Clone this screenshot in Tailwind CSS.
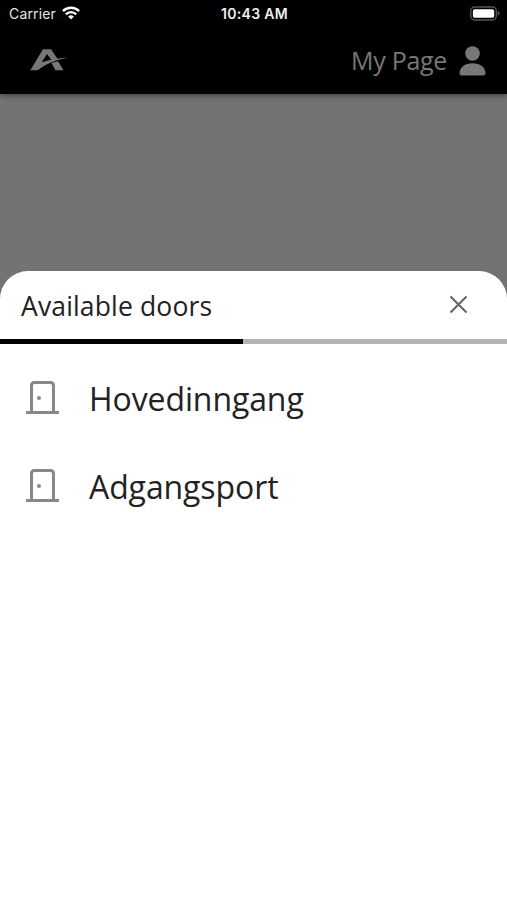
<!DOCTYPE html>
<html lang="en">
<head>
  <meta charset="UTF-8" />
  <meta name="viewport" content="width=device-width, initial-scale=1" />
  <title>Available doors</title>
  <script src="https://cdn.jsdelivr.net/npm/@tailwindcss/browser@4"></script>
</head>
<body class="h-screen flex flex-col overflow-hidden bg-[#737373] font-['Open_Sans',sans-serif]">

  <!-- Status bar -->
  <div class="relative z-10 h-7 shrink-0 grid grid-cols-3 items-center bg-black pl-[9px] pr-[7px] text-white font-['Inter',sans-serif] text-[14px] leading-none">
    <div class="flex items-center gap-[6px]">
      <span class="-mt-px tracking-[0.150px] text-[#e5e5e5]">Carrier</span>
      <svg class="w-[18px] h-[14px] -mt-0.5" viewBox="0 0 18 14" fill="none" stroke="#fff" stroke-width="2.4">
        <path d="M.9 5.1a11.5 11.5 0 0 1 16.2 0" />
        <path d="M3.8 8.3a7.3 7.3 0 0 1 10.4 0" />
        <path d="M9 13.6l-2.9-3a4.1 4.1 0 0 1 5.8 0z" fill="#fff" stroke="none" />
      </svg>
    </div>
    <span class="-mt-px text-center font-semibold tracking-[0.300px] text-[#eee]">10:43 AM</span>
    <svg class="justify-self-end w-[30px] h-[15px] -mt-0.5" viewBox="0 0 31 15">
      <rect x=".8" y=".8" width="26.4" height="13.4" rx="4" fill="none" stroke="#555" stroke-width="1.4" />
      <rect x="3" y="3" width="22" height="9" rx="2" fill="#fff" />
      <path d="M28.6 5v5q2-1 2-2.500t-2-2.500z" fill="#555" />
    </svg>
  </div>

  <!-- Header -->
  <header class="h-[66px] shrink-0 flex items-center justify-between bg-black pl-[30px] pr-[21px] shadow-[0_2px_5px_rgba(0,0,0,0.4)]">
    <svg class="w-[38px] h-[22px] -mt-0.5" viewBox="0 0 38 22" fill="#777">
      <path d="M.3 21.300 13 .3h8l6.500 9.500-6 1.300L17 5l-5.300 8.300Q21 9.500 38 8.400 18 12.500 7.500 21.300z" />
      <path d="M21.500 14 28 12.200 33.500 21.300h-8z" />
    </svg>
    <div class="flex items-center gap-3 text-[#777]">
      <span class="-mt-px text-[25px] tracking-[-0.300px] leading-none">My Page</span>
      <svg class="w-[27px] h-[30px] -mt-px" viewBox="0 0 27 30" fill="currentColor">
        <circle cx="13.500" cy="7.500" r="7.300" />
        <path d="M.5 27.500C.5 21 6 17.200 13.500 17.200S26.500 21 26.500 27.500q0 2-2 2h-22q-2 0-2-2z" />
      </svg>
    </div>
  </header>

  <!-- Bottom sheet -->
  <main class="mt-[176.500px] grow bg-white rounded-t-[28px] overflow-hidden text-[#222]">
    <div class="h-[68.500px] flex items-center justify-between pl-[21px] pr-[39px]">
      <h1 class="pt-[3px] text-[26.500px] tracking-[0.150px] leading-none">Available doors</h1>
      <button aria-label="Close">
        <svg class="w-[19px] h-[19px]" viewBox="0 0 19 19" fill="none" stroke="#5f6368" stroke-width="2">
          <path d="M1.500 1.500l16 16M17.500 1.500l-16 16" />
        </svg>
      </button>
    </div>
    <div class="h-[5px] bg-[#b3b3b3]">
      <div class="h-full w-[48%] bg-black"></div>
    </div>
    <ul class="pt-[10px] text-[32px] tracking-[-0.100px] leading-none">
      <li class="h-22 flex items-center gap-[30px] pl-[26px]">
        <svg class="w-[33px] h-[34px]" viewBox="0 0 33 34" fill="none" stroke="#888" stroke-width="3">
          <path d="M5.500 31V4.500q0-3 3-3h16q3 0 3 3V31M0 31.500h33" />
          <circle cx="13" cy="17" r="2" fill="#888" stroke="none" />
        </svg>
        <span class="pt-0.5">Hovedinngang</span>
      </li>
      <li class="h-22 flex items-center gap-[30px] pl-[26px]">
        <svg class="w-[33px] h-[34px]" viewBox="0 0 33 34" fill="none" stroke="#888" stroke-width="3">
          <path d="M5.500 31V4.500q0-3 3-3h16q3 0 3 3V31M0 31.500h33" />
          <circle cx="13" cy="17" r="2" fill="#888" stroke="none" />
        </svg>
        <span class="pt-0.5">Adgangsport</span>
      </li>
    </ul>
  </main>

</body>
</html>
